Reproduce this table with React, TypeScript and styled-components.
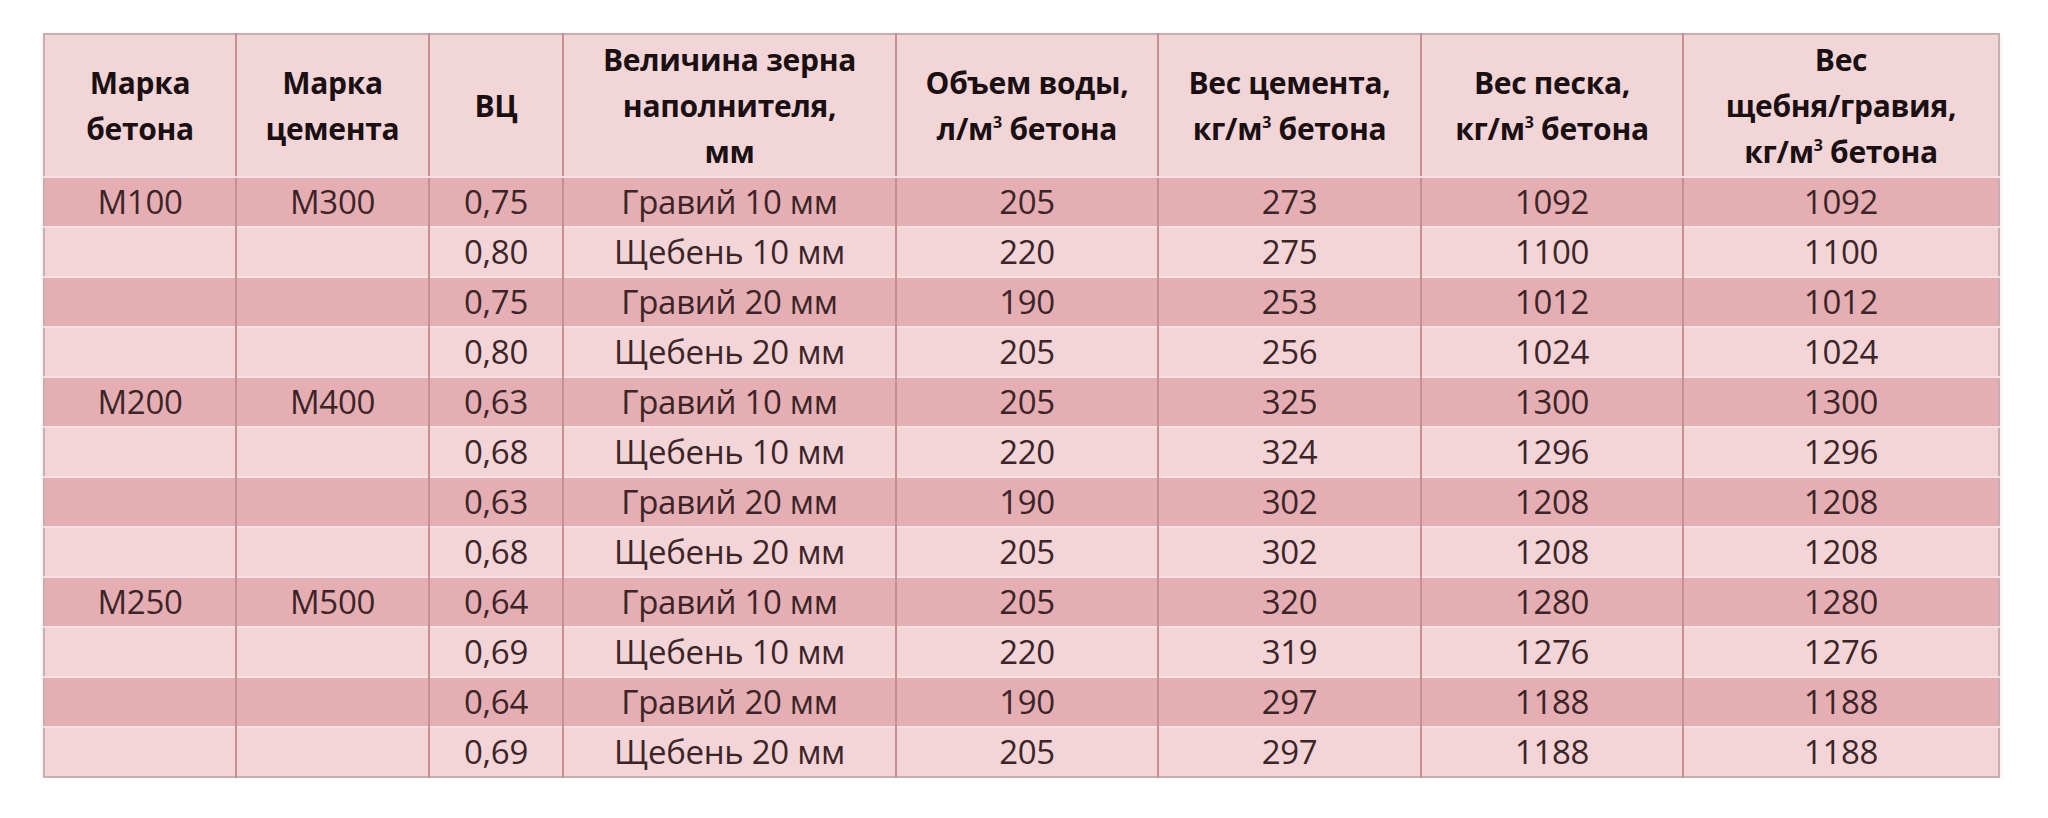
import styled, { createGlobalStyle } from 'styled-components';

const GlobalStyle = createGlobalStyle`
  html, body {
    margin: 0;
    padding: 0;
    background: #fff;
  }
`;

const Page = styled.div`
  padding: 33px 0 0 43px;
  font-family: 'Open Sans', 'Liberation Sans', sans-serif;
`;

const Table = styled.table`
  width: 1955px;
  table-layout: fixed;
  border-collapse: collapse;
  border: 2px solid #c9aeb1;
  box-shadow: 0 2px 4px rgba(120, 80, 85, 0.15);
`;

const HeadCell = styled.th`
  height: 141px;
  padding: 0 4px;
  background: #f2d5d7;
  color: #1a1012;
  font-weight: 700;
  font-size: 30px;
  line-height: 46px;
  letter-spacing: -0.3px;
  text-align: center;
  vertical-align: middle;
  border-left: 2px solid #c68f94;
  border-bottom: 2px solid #f6e1e2;

  &:first-child {
    border-left: none;
  }

  sup {
    font-size: 16px;
    line-height: 0;
    vertical-align: 12px;
  }
`;

const Row = styled.tr<{ $dark: boolean }>`
  height: 50px;
  background: ${p => (p.$dark ? '#e5aeb2' : '#f3d5d7')};
`;

const Cell = styled.td`
  padding: 0;
  color: #3c2529;
  font-size: 33px;
  line-height: 40px;
  letter-spacing: -0.3px;
  text-align: center;
  vertical-align: middle;
  border-left: 2px solid #c68f94;
  border-top: 2px solid #f6e1e2;

  &:first-child {
    border-left: none;
  }
`;

const widths = [192, 193, 134, 333, 262, 263, 262, 316];

const m3 = <sup>3</sup>;

const headers = [
  <>Марка<br />бетона</>,
  <>Марка<br />цемента</>,
  <>ВЦ</>,
  <>Величина зерна<br />наполнителя,<br />мм</>,
  <>Объем воды,<br />л/м{m3} бетона</>,
  <>Вес цемента,<br />кг/м{m3} бетона</>,
  <>Вес песка,<br />кг/м{m3} бетона</>,
  <>Вес<br />щебня/гравия,<br />кг/м{m3} бетона</>
];

const rows = [
  ['М100', 'М300', '0,75', 'Гравий 10 мм', '205', '273', '1092', '1092'],
  ['', '', '0,80', 'Щебень 10 мм', '220', '275', '1100', '1100'],
  ['', '', '0,75', 'Гравий 20 мм', '190', '253', '1012', '1012'],
  ['', '', '0,80', 'Щебень 20 мм', '205', '256', '1024', '1024'],
  ['М200', 'М400', '0,63', 'Гравий 10 мм', '205', '325', '1300', '1300'],
  ['', '', '0,68', 'Щебень 10 мм', '220', '324', '1296', '1296'],
  ['', '', '0,63', 'Гравий 20 мм', '190', '302', '1208', '1208'],
  ['', '', '0,68', 'Щебень 20 мм', '205', '302', '1208', '1208'],
  ['М250', 'М500', '0,64', 'Гравий 10 мм', '205', '320', '1280', '1280'],
  ['', '', '0,69', 'Щебень 10 мм', '220', '319', '1276', '1276'],
  ['', '', '0,64', 'Гравий 20 мм', '190', '297', '1188', '1188'],
  ['', '', '0,69', 'Щебень 20 мм', '205', '297', '1188', '1188']
];

const App = () => {
  return (
    <>
      <GlobalStyle />
      <Page>
        <Table>
          <colgroup>
            {widths.map((w, i) => (
              <col key={i} style={{ width: w }} />
            ))}
          </colgroup>
          <thead>
            <tr>
              {headers.map((h, i) => (
                <HeadCell key={i}>{h}</HeadCell>
              ))}
            </tr>
          </thead>
          <tbody>
            {rows.map((r, i) => (
              <Row key={i} $dark={i % 2 === 0}>
                {r.map((c, j) => (
                  <Cell key={j}>{c}</Cell>
                ))}
              </Row>
            ))}
          </tbody>
        </Table>
      </Page>
    </>
  );
};

export default App;
